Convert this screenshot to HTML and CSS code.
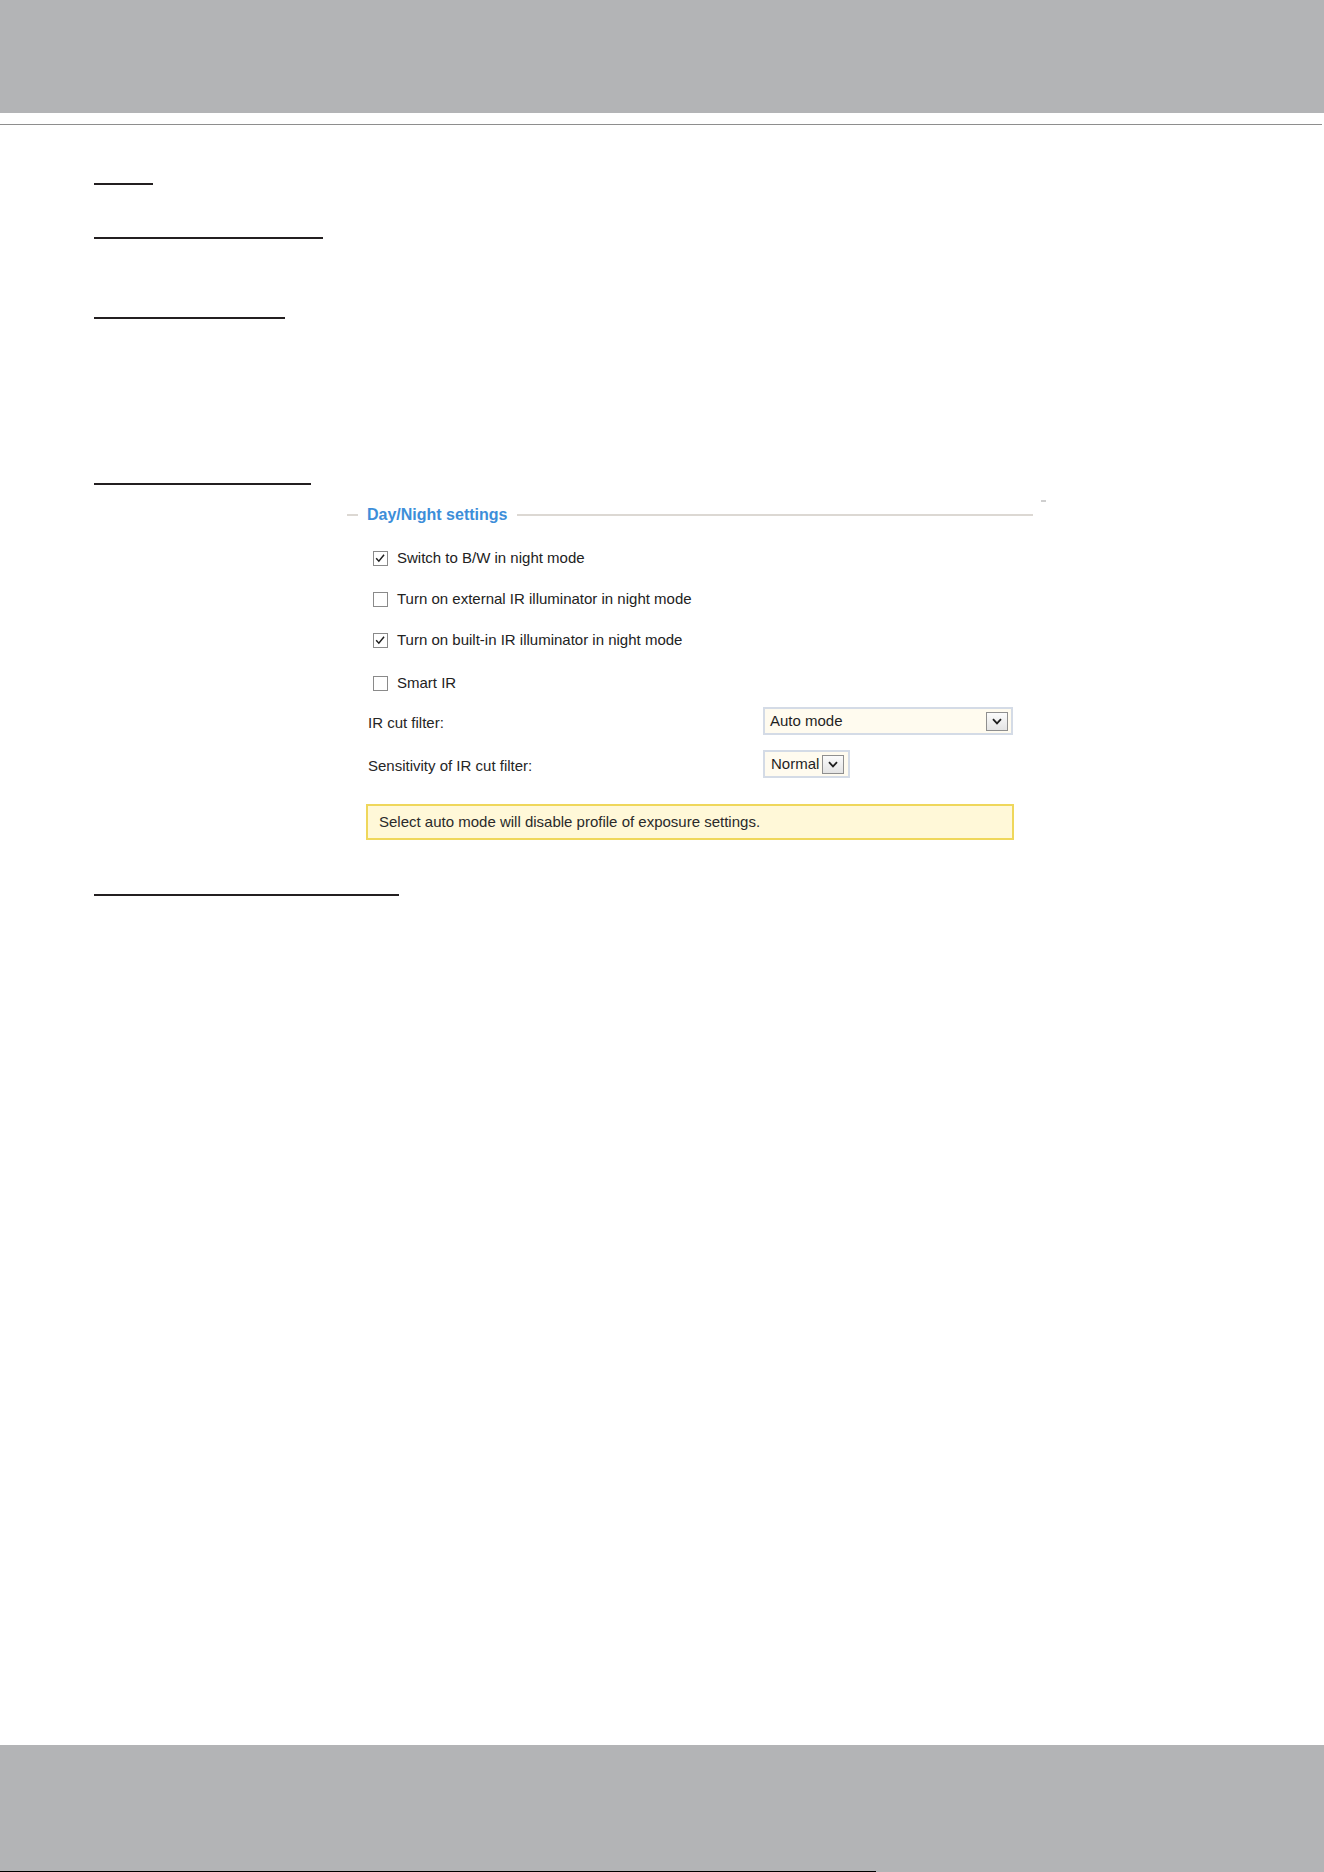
FILE: index.html
```html
<!DOCTYPE html>
<html lang="en">
<head>
<meta charset="utf-8">
<title>Day/Night settings</title>
<link rel="stylesheet" href="styles.css">
</head>
<body>
<div class="page">
  <header class="topbar"></header>
  <div class="divider"></div>

  <main class="content">
    <div class="rule rule-1"></div>
    <div class="rule rule-2"></div>
    <div class="rule rule-3"></div>
    <div class="rule rule-4"></div>

    <section class="panel">
      <span class="panel-tick"></span>
      <div class="legend">
        <span class="legend-dash"></span>
        <span class="legend-title">Day/Night settings</span>
        <span class="legend-line"></span>
      </div>

      <div class="panel-body">
        <label class="check-row first">
          <span class="box"><svg viewBox="0 0 15 15" width="13" height="13"><path d="M2.5 7.2 L5.6 10.6 L11.6 3.2" fill="none" stroke="#1f1f1f" stroke-width="1.7"/></svg></span>
          <span class="check-text">Switch to B/W in night mode</span>
        </label>
        <label class="check-row">
          <span class="box"></span>
          <span class="check-text">Turn on external IR illuminator in night mode</span>
        </label>
        <label class="check-row">
          <span class="box"><svg viewBox="0 0 15 15" width="13" height="13"><path d="M2.5 7.2 L5.6 10.6 L11.6 3.2" fill="none" stroke="#1f1f1f" stroke-width="1.7"/></svg></span>
          <span class="check-text">Turn on built-in IR illuminator in night mode</span>
        </label>
        <label class="check-row last">
          <span class="box"></span>
          <span class="check-text">Smart IR</span>
        </label>

        <div class="field first">
          <span class="field-label">IR cut filter:</span>
          <div class="select select-wide">
            <span class="select-value">Auto mode</span>
            <span class="select-btn"><svg viewBox="0 0 10 7" width="10" height="7"><path d="M1 1.2 L5 5.4 L9 1.2" fill="none" stroke="#1f1f1f" stroke-width="1.8"/></svg></span>
          </div>
        </div>
        <div class="field">
          <span class="field-label">Sensitivity of IR cut filter:</span>
          <div class="select select-narrow">
            <span class="select-value">Normal</span>
            <span class="select-btn"><svg viewBox="0 0 10 7" width="10" height="7"><path d="M1 1.2 L5 5.4 L9 1.2" fill="none" stroke="#1f1f1f" stroke-width="1.8"/></svg></span>
          </div>
        </div>

        <div class="note">Select auto mode will disable profile of exposure settings.</div>
      </div>
    </section>

    <div class="rule rule-5"></div>
  </main>

  <footer class="bottombar">
    <div class="bottom-edge"></div>
  </footer>
</div>
</body>
</html>
```

FILE: styles.css
```css
* {
  box-sizing: border-box;
}

html, body {
  margin: 0;
  padding: 0;
  background: #ffffff;
}

body {
  font-family: "Liberation Sans", Arial, sans-serif;
  color: #222222;
}

.page {
  width: 1324px;
  height: 1872px;
  display: flex;
  flex-direction: column;
  overflow: hidden;
}

/* grey page bands */
.topbar {
  height: 113px;
  flex: none;
  background: #b3b4b6;
}

.divider {
  flex: none;
  height: 1px;
  margin-top: 11px;
  width: 1322px;
  background: #8e8e8e;
}

.bottombar {
  flex: none;
  height: 127px;
  background: #b3b4b6;
  display: flex;
  flex-direction: column;
  justify-content: flex-end;
}

.bottom-edge {
  width: 876px;
  height: 1px;
  background: #000000;
}

/* main column */
.content {
  flex: 1;
  padding-left: 94px;
  display: flex;
  flex-direction: column;
  align-items: flex-start;
}

.rule {
  height: 2px;
  background: #231f20;
  flex: none;
}

.rule-1 { width: 59px;  margin-top: 58px; }
.rule-2 { width: 229px; margin-top: 52px; }
.rule-3 { width: 191px; margin-top: 78px; }
.rule-4 { width: 217px; margin-top: 164px; }
.rule-5 { width: 305px; margin-top: 54px; }

/* settings panel */
.panel {
  position: relative;
  width: 699px;
  margin-left: 253px;
}

.panel-tick {
  position: absolute;
  left: 694px;
  top: 15px;
  width: 5px;
  height: 2px;
  background: #cfcfcf;
}

.legend {
  display: flex;
  align-items: center;
  height: 20px;
  margin-top: 20px;
}

.legend-dash {
  width: 11px;
  height: 2px;
  background: #dcd8d3;
  margin-right: 9px;
}

.legend-title {
  font-size: 16px;
  font-weight: bold;
  line-height: 20px;
  color: #3d8ed9;
  white-space: nowrap;
}

.legend-line {
  flex: 1;
  height: 2px;
  background: #dcd8d3;
  margin-left: 10px;
  margin-right: 13px;
}

.panel-body {
  padding-left: 19px;
  display: flex;
  flex-direction: column;
  align-items: flex-start;
  font-size: 15px;
  line-height: 20px;
}

.check-row {
  display: flex;
  align-items: center;
  height: 20px;
  padding-left: 7px;
  margin-top: 21px;
}

.check-row.first { margin-top: 23px; }
.check-row.last { margin-top: 23px; }

.box {
  width: 15px;
  height: 15px;
  border: 1px solid #8a8a8a;
  background: #ffffff;
  margin-right: 9px;
  display: flex;
  align-items: center;
  justify-content: center;
  flex: none;
}

.check-text {
  color: #222222;
  white-space: nowrap;
}

.field {
  display: flex;
  align-items: center;
  height: 28px;
  margin-top: 15px;
}

.field.first { margin-top: 14px; }

.field-label {
  width: 397px;
  padding-left: 2px;
  padding-top: 4px;
  color: #262626;
}

.select {
  display: flex;
  align-items: center;
  height: 28px;
  border: 2px solid #d4dbe6;
  background: #fffbef;
  color: #1f1f1f;
}

.select-wide {
  width: 250px;
  justify-content: space-between;
  padding: 0 3px 0 5px;
}

.select-narrow {
  width: 87px;
  padding: 0 4px 0 6px;
  gap: 3px;
}

.select-value {
  white-space: nowrap;
}

.select-btn {
  width: 22px;
  height: 19px;
  flex: none;
  border: 1px solid #8f8f8f;
  background: linear-gradient(#fbfbfb, #e4e4e4);
  display: flex;
  align-items: center;
  justify-content: center;
}

.note {
  width: 648px;
  height: 36px;
  margin-top: 26px;
  border: 2px solid #efd75b;
  background: #fff8d8;
  padding-left: 11px;
  display: flex;
  align-items: center;
  color: #2a2a2a;
  white-space: nowrap;
}
```
